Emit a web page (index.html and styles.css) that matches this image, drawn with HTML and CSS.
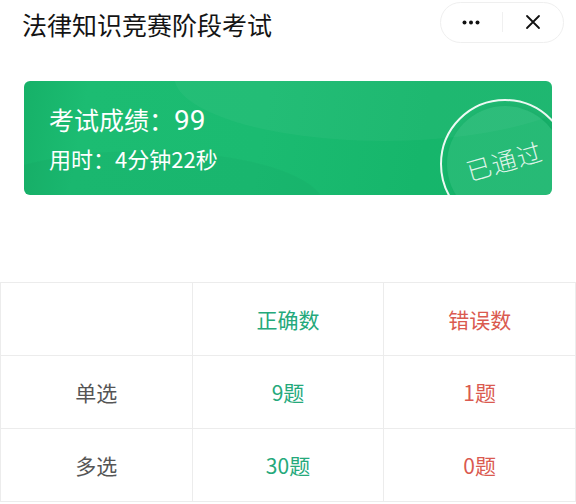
FILE: index.html
```html
<!DOCTYPE html>
<html lang="zh-CN">
<head>
    <meta charset="UTF-8">
    <meta name="viewport" content="width=device-width, initial-scale=1.0">
    <title>法律知识竞赛阶段考试</title>
    <link rel="stylesheet" href="styles.css">
</head>
<body>
    <div class="topbar">
        <h1 class="titulo">法律知识竞赛阶段考试</h1>
        <div class="capsula">
            <span class="capsula-btn">
                <svg width="18" height="5" viewBox="0 0 18 5"><circle cx="2.5" cy="2.5" r="2" fill="#111"/><circle cx="9" cy="2.5" r="2" fill="#111"/><circle cx="15.5" cy="2.5" r="2" fill="#111"/></svg>
            </span>
            <span class="capsula-sep"></span>
            <span class="capsula-btn">
                <svg width="16" height="16" viewBox="0 0 16 16"><path d="M2 2 L14 14 M14 2 L2 14" stroke="#111" stroke-width="1.8" stroke-linecap="round"/></svg>
            </span>
        </div>
    </div>

    <div class="tarjeta">
        <div class="onda"></div>
        <div class="onda onda-baja"></div>
        <div class="resultado">
            <div class="nota">考试成绩：<span class="numero">99</span></div>
            <div class="tiempo">用时：4分钟22秒</div>
        </div>
        <div class="sello">
            <div class="sello-disco"></div>
            <span class="sello-texto">已通过</span>
        </div>
    </div>

    <table class="tabla">
        <tr>
            <th></th>
            <th class="ok">正确数</th>
            <th class="mal">错误数</th>
        </tr>
        <tr>
            <td>单选</td>
            <td class="ok">9题</td>
            <td class="mal">1题</td>
        </tr>
        <tr>
            <td>多选</td>
            <td class="ok">30题</td>
            <td class="mal">0题</td>
        </tr>
    </table>
</body>
</html>
```

FILE: styles.css
```css
body {
    margin: 0;
    background-color: #fff;
    font-family: 'Noto Sans CJK SC', 'Noto Sans', sans-serif;
    color: #222;
}

.topbar {
    display: flex;
    justify-content: space-between;
    align-items: center;
    height: 48px;
    padding: 0 12px 0 22px;
}

.titulo {
    margin: 0;
    font-size: 25px;
    font-weight: 400;
    color: #141414;
}

.capsula {
    display: flex;
    align-items: center;
    width: 124px;
    height: 41px;
    border: 1px solid #efefef;
    border-radius: 21px;
    box-sizing: border-box;
    margin-top: -4px;
}

.capsula-btn {
    flex: 1;
    display: flex;
    justify-content: center;
    align-items: center;
}

.capsula-sep {
    width: 1px;
    height: 20px;
    background-color: #f0f0f0;
}

.tarjeta {
    position: relative;
    overflow: hidden;
    margin: 33px 24px 0 24px;
    height: 114px;
    border-radius: 6px;
    background: linear-gradient(100deg, #16b168 0%, #1cbc72 12%, #1bbb71 45%, #16b66b 75%, #17b56c 100%);
    color: #fff;
}

.onda {
    position: absolute;
    left: 150px;
    top: -70px;
    width: 420px;
    height: 130px;
    border-radius: 50%;
    background-color: rgba(255, 255, 255, 0.035);
}

.onda-baja {
    left: -60px;
    top: 70px;
    width: 360px;
    height: 110px;
    background-color: rgba(0, 80, 40, 0.04);
}

.resultado {
    position: relative;
    padding: 20px 0 0 25px;
}

.nota {
    font-size: 25px;
    line-height: 36px;
}

.numero {
    font-family: 'Roboto', 'Noto Sans', sans-serif;
    font-size: 28px;
}

.tiempo {
    font-size: 22px;
    line-height: 36px;
    margin-top: 1px;
}

.sello {
    position: absolute;
    left: 416px;
    top: 18px;
    width: 130px;
    height: 130px;
    border: 2px solid rgba(255, 255, 255, 0.92);
    border-radius: 50%;
    box-sizing: border-box;
}

.sello-disco {
    position: absolute;
    inset: 5px;
    border-radius: 50%;
    background-color: rgba(255, 255, 255, 0.07);
    box-shadow: 4px 2px 8px rgba(0, 60, 30, 0.12);
}

.sello-texto {
    position: absolute;
    left: 23px;
    top: 41px;
    font-size: 25px;
    font-weight: 300;
    color: rgba(255, 255, 255, 0.85);
    transform: rotate(-16deg);
    letter-spacing: 1px;
}

.tabla {
    margin-top: 87px;
    width: 100%;
    border-collapse: collapse;
    table-layout: fixed;
}

.tabla th, .tabla td {
    height: 72px;
    padding: 0;
    border: 1px solid #ececec;
    text-align: center;
    font-size: 21px;
    font-weight: 400;
    color: #555;
}

.tabla .ok {
    color: #25a97b;
}

.tabla .mal {
    color: #da5a50;
}
```
